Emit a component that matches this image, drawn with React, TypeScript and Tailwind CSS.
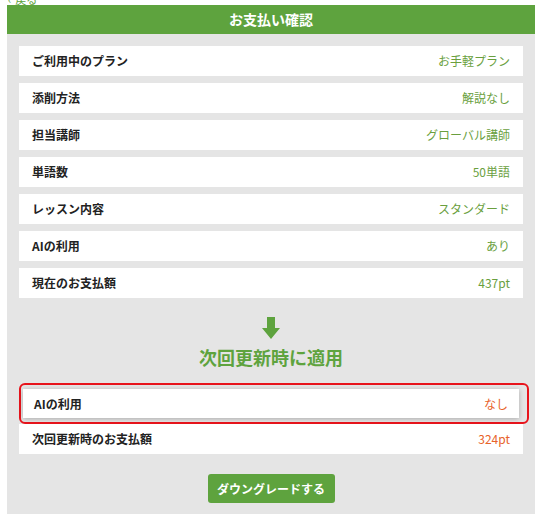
const font = { fontFamily: '"Noto Sans CJK JP", "Noto Sans", sans-serif' };

type Row = { label: string; value: string };

const currentRows: Row[] = [
  { label: "ご利用中のプラン", value: "お手軽プラン" },
  { label: "添削方法", value: "解説なし" },
  { label: "担当講師", value: "グローバル講師" },
  { label: "単語数", value: "50単語" },
  { label: "レッスン内容", value: "スタンダード" },
  { label: "AIの利用", value: "あり" },
  { label: "現在のお支払額", value: "437pt" },
];

function InfoRow({ label, value, valueClass }: Row & { valueClass: string }) {
  return (
    <div className="flex h-[30px] items-center justify-between bg-white px-[13px] text-[12px]">
      <span className="font-bold text-[#222]">{label}</span>
      <span className={valueClass}>{value}</span>
    </div>
  );
}

export default function App() {
  return (
    <div className="min-h-[529px] bg-white" style={font}>
      {/* back link, mostly scrolled off the top */}
      <div className="h-[5px] overflow-hidden pl-[8px]">
        <div className="-mt-[9px] flex items-center gap-1 text-[11px] text-[#5ea33e]">
          <span>‹</span>
          <span>戻る</span>
        </div>
      </div>

      <div className="ml-[7px] w-[528px]">
        <div className="flex h-[29px] items-center justify-center bg-[#5ea33e] text-[14px] font-bold text-white">
          お支払い確認
        </div>

        <div className="flex flex-col bg-[#e5e5e5] px-[12px] pt-[12px] pb-[11px]">
          <div className="flex flex-col gap-[7px]">
            {currentRows.map((r) => (
              <InfoRow key={r.label} {...r} valueClass="text-[#6a9f3e]" />
            ))}
          </div>

          <div className="mt-[19px] flex flex-col items-center">
            <svg width="18" height="22" viewBox="0 0 18 22">
              <path d="M5 0 H13 V11 H18 L9 22 L0 11 H5 Z" fill="#5ea33e" />
            </svg>
            <div className="mt-[5px] text-[18px] leading-[26px] font-bold text-[#5ea33e]">
              次回更新時に適用
            </div>
          </div>

          <div className="mt-[13px] flex flex-col">
            <div className="-mr-[6px] rounded-[6px] border-2 border-[#e8141c] py-[4px] pr-[8px] pl-[2px]">
              <div className="flex h-[29px] items-center justify-between bg-white px-[11px] text-[12px] shadow-[0_1px_5px_rgba(0,0,0,0.25)]">
                <span className="font-bold text-[#222]">AIの利用</span>
                <span className="text-[#e8622a]">なし</span>
              </div>
            </div>
            <InfoRow label="次回更新時のお支払額" value="324pt" valueClass="text-[#e8622a]" />
          </div>

          <div className="mt-[20px] flex justify-center">
            <button className="h-[29px] w-[127px] rounded-[3px] bg-[#5ea33e] text-[12px] font-bold text-white">
              ダウングレードする
            </button>
          </div>
        </div>
      </div>
    </div>
  );
}
